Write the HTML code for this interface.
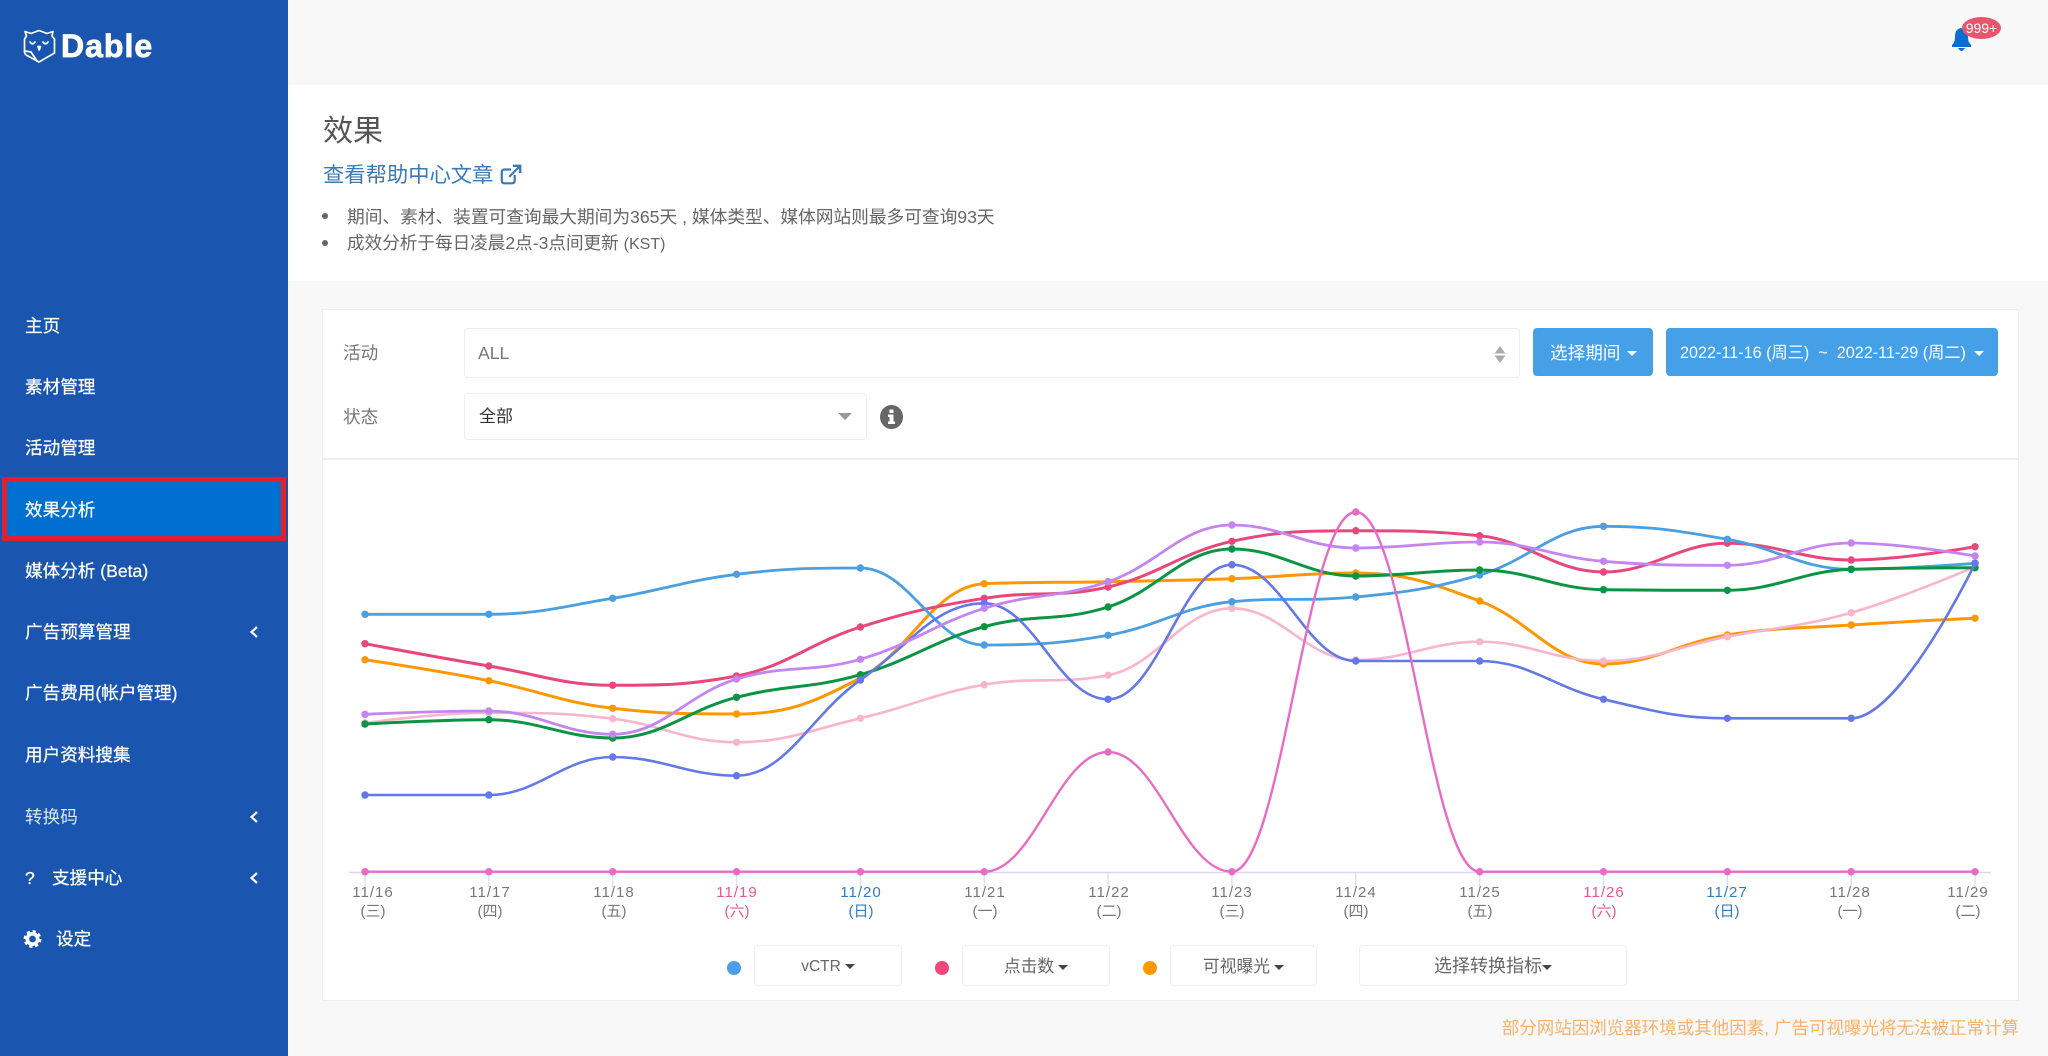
<!DOCTYPE html>
<html lang="zh"><head><meta charset="utf-8"><title>效果</title>
<style>
html,body{margin:0;padding:0;width:2048px;height:1056px;overflow:hidden;background:#f8f8f8}
body{position:relative;font-family:"Liberation Sans","Noto Sans CJK SC",sans-serif;color:#666}
div,a,span.a{position:absolute;box-sizing:border-box}
.t{white-space:nowrap;height:30px;line-height:30px;font-size:17.6px}
#side{left:0;top:0;width:288px;height:1056px;background:#1a56b0}
.m{left:25px;color:#fff;-webkit-text-stroke:.25px #fff}
.box{background:#fff;border:1px solid #eee;border-radius:4px}
.btn{background:#46a0e8;border-radius:4px;color:#fff}
.car{width:0;height:0;border-left:5.5px solid transparent;border-right:5.5px solid transparent;border-top:5.5px solid #fff}
.lab{width:80px;text-align:center;font-size:15px;letter-spacing:1px;height:20px;line-height:20px;white-space:nowrap;color:#777}
.w{width:80px;text-align:center;font-size:15px;height:22px;line-height:22px;color:#777}
.sat{color:#e8578a}.sun{color:#2f7cc4}
.dot{width:14px;height:14px;border-radius:50%}
.lg{background:#fff;border:1px solid #f0f0f0;border-radius:4px;top:945px;height:41px;line-height:41px;text-align:center;font-size:16.8px;color:#666;white-space:nowrap}
.dc{display:inline-block;width:0;height:0;border-left:5px solid transparent;border-right:5px solid transparent;border-top:5.5px solid #444;vertical-align:2px;margin-left:4px}
svg{position:absolute}
</style></head><body>

<div id="side"></div>
<svg style="left:22px;top:28px" width="36" height="36" viewBox="0 0 36 36" fill="none" stroke="#fff" stroke-width="1.7" stroke-linejoin="round" stroke-linecap="round">
<path d="M3 3.500 L9 5.500 L17 2.500 L25 5.500 L31 3.500 L30 8 L32.500 11 V25 L17 34 L5 27.500 Q2.500 26 2.500 24 V11 L4.500 8 Z"/>
<path d="M3 23 L9 24 L15 33"/>
<path d="M8 14 Q10.500 17.500 13 14 M21 14 Q23.500 17.500 26 14"/>
<path d="M16 18.500 L17.200 22 L18.500 18.500 Z" fill="#fff"/>
</svg>
<div class="t" style="left:61px;top:30px;height:32px;line-height:32px;font-size:32px;font-weight:700;color:#fff;letter-spacing:1px;-webkit-text-stroke:.8px #fff">Dable</div>

<div class="t m" style="top:311px">主页</div>
<div class="t m" style="top:372px">素材管理</div>
<div class="t m" style="top:433px">活动管理</div>
<div style="left:2px;top:477px;width:284px;height:64px;background:#0070d0;border:5px solid #e0202c"></div>
<div class="t m" style="top:495px">效果分析</div>
<div class="t m" style="top:556px">媒体分析 (Beta)</div>
<div class="t m" style="top:617px">广告预算管理</div>
<div class="t m" style="top:678px">广告费用(帐户管理)</div>
<div class="t m" style="top:740px">用户资料搜集</div>
<div class="t m" style="top:802px;-webkit-text-stroke:0;color:#dbe6f6">转换码</div>
<div class="t m" style="top:863px">?</div>
<div class="t m" style="left:52px;top:863px">支援中心</div>
<svg style="left:20px;top:929px" width="24" height="20" viewBox="0 0 24 20"><circle cx="12.500" cy="10" r="5.200" fill="none" stroke="#fff" stroke-width="3.600"/><circle cx="12.500" cy="10" r="7.800" fill="none" stroke="#fff" stroke-width="2.200" stroke-dasharray="3.300 2.800"/></svg>
<div class="t m" style="left:56px;top:924px">设定</div>
<svg style="left:248px;top:624px" width="12" height="16" viewBox="0 0 12 16" fill="none" stroke="#fff" stroke-width="2.200"><path d="M9 3 L3.500 8 L9 13"/></svg>
<svg style="left:248px;top:809px" width="12" height="16" viewBox="0 0 12 16" fill="none" stroke="#fff" stroke-width="2.200"><path d="M9 3 L3.500 8 L9 13"/></svg>
<svg style="left:248px;top:870px" width="12" height="16" viewBox="0 0 12 16" fill="none" stroke="#fff" stroke-width="2.200"><path d="M9 3 L3.500 8 L9 13"/></svg>

<svg style="left:1950px;top:26px" width="24" height="26" viewBox="0 0 24 26"><path d="M11 2 C6 3 5 7 5 11 C5 15 4 17 2 19 L2 21 L21 21 L21 19 C19 17 18 15 18 11 C18 7 16 3 11 2 Z" fill="#0a6ed1"/><path d="M8 22 H15 Q13 25 11.500 25 Q10 25 8 22 Z" fill="#0a6ed1"/></svg>
<div style="left:1962px;top:17px;width:39px;height:22px;border-radius:50%;background:#e8566e;color:#fff;font-size:14px;line-height:22px;text-align:center">999+</div>

<div style="left:288px;top:85px;width:1760px;height:196px;background:#fff"></div>
<div class="t" style="left:323px;top:112px;height:40px;line-height:40px;font-size:30px;color:#555">效果</div>
<div class="t" style="left:323px;top:160px;font-size:21.3px;color:#3a7ab8">查看帮助中心文章</div>
<svg style="left:499px;top:163px" width="24" height="24" viewBox="0 0 26 26" fill="none" stroke="#3a7ab8" stroke-width="2.400"><path d="M17 13 V19 Q17 22 14 22 H6 Q3 22 3 19 V10 Q3 7 6 7 H13"/><path d="M11 15 L22 4"/><path d="M15 3 H23 V11" stroke-width="2.600"/></svg>
<div style="left:322px;top:213px;width:6px;height:6px;border-radius:50%;background:#666"></div>
<div style="left:322px;top:240px;width:6px;height:6px;border-radius:50%;background:#666"></div>
<div class="t" style="left:347px;top:202px;font-size:17.7px">期间、素材、装置可查询最大期间为365天 , 媒体类型、媒体网站则最多可查询93天</div>
<div class="t" style="left:347px;top:228px">成效分析于每日凌晨2点-3点间更新 <span style="font-size:16px">(KST)</span></div>

<div style="left:322px;top:309px;width:1697px;height:692px;background:#fff;border:1px solid #eee"></div>
<div style="left:323px;top:458px;width:1695px;height:2px;background:#eee"></div>

<div class="t" style="left:343px;top:338px;color:#777">活动</div>
<div class="box" style="left:464px;top:328px;width:1056px;height:50px"></div>
<div class="t" style="left:478px;top:338px;color:#777">ALL</div>
<svg style="left:1493px;top:345px" width="14" height="20" viewBox="0 0 14 20" fill="#aaa"><path d="M7 1 L12.500 8.500 H1.500 Z M7 18 L12.500 10.500 H1.500 Z"/></svg>

<div class="btn" style="left:1533px;top:328px;width:120px;height:48px"></div>
<div class="t" style="left:1550px;top:338px;color:#fff">选择期间</div>
<div class="car" style="left:1627px;top:351px"></div>
<div class="btn" style="left:1666px;top:328px;width:332px;height:48px"></div>
<div class="t" style="left:1680px;top:338px;color:#fff;font-size:16.2px">2022-11-16 (周三) &nbsp;~&nbsp; 2022-11-29 (周二)</div>
<div class="car" style="left:1974px;top:351px"></div>

<div class="t" style="left:343px;top:402px;color:#777">状态</div>
<div class="box" style="left:464px;top:393px;width:403px;height:47px"></div>
<div class="t" style="left:479px;top:402px;color:#333;font-size:17px">全部</div>
<div style="left:838px;top:413px;width:0;height:0;border-left:7px solid transparent;border-right:7px solid transparent;border-top:7px solid #999"></div>
<svg style="left:879px;top:404px" width="25" height="26" viewBox="0 0 25 26"><ellipse cx="12.500" cy="13" rx="11.500" ry="12" fill="#666"/><path d="M10.500 5.500 h4 v3.500 h-4 z M9 10.500 h5.500 v7 h1.500 v2.500 h-7 v-2.500 h1.500 v-4.500 h-1.500 z" fill="#fff"/></svg>

<svg id="chart" style="left:0;top:0" width="2048" height="1056" viewBox="0 0 2048 1056"></svg>

<div class="lab" style="left:333px;top:883px">11/16</div><div class="w" style="left:333px;top:901px">(三)</div>
<div class="lab" style="left:450px;top:883px">11/17</div><div class="w" style="left:450px;top:901px">(四)</div>
<div class="lab" style="left:574px;top:883px">11/18</div><div class="w" style="left:574px;top:901px">(五)</div>
<div class="lab sat" style="left:697px;top:883px">11/19</div><div class="w sat" style="left:697px;top:901px">(六)</div>
<div class="lab sun" style="left:821px;top:883px">11/20</div><div class="w sun" style="left:821px;top:901px">(日)</div>
<div class="lab" style="left:945px;top:883px">11/21</div><div class="w" style="left:945px;top:901px">(一)</div>
<div class="lab" style="left:1069px;top:883px">11/22</div><div class="w" style="left:1069px;top:901px">(二)</div>
<div class="lab" style="left:1192px;top:883px">11/23</div><div class="w" style="left:1192px;top:901px">(三)</div>
<div class="lab" style="left:1316px;top:883px">11/24</div><div class="w" style="left:1316px;top:901px">(四)</div>
<div class="lab" style="left:1440px;top:883px">11/25</div><div class="w" style="left:1440px;top:901px">(五)</div>
<div class="lab sat" style="left:1564px;top:883px">11/26</div><div class="w sat" style="left:1564px;top:901px">(六)</div>
<div class="lab sun" style="left:1687px;top:883px">11/27</div><div class="w sun" style="left:1687px;top:901px">(日)</div>
<div class="lab" style="left:1810px;top:883px">11/28</div><div class="w" style="left:1810px;top:901px">(一)</div>
<div class="lab" style="left:1928px;top:883px">11/29</div><div class="w" style="left:1928px;top:901px">(二)</div>

<div class="dot" style="left:727px;top:961px;background:#4a9fe8"></div>
<div class="lg" style="left:754px;width:148px;font-size:15.5px">vCTR<span class="dc"></span></div>
<div class="dot" style="left:935px;top:961px;background:#f0487c"></div>
<div class="lg" style="left:962px;width:148px">点击数<span class="dc"></span></div>
<div class="dot" style="left:1143px;top:961px;background:#ff9800"></div>
<div class="lg" style="left:1170px;width:147px">可视曝光<span class="dc"></span></div>
<div class="lg" style="left:1359px;width:268px;font-size:18px">选择转换指标<span class="dc" style="margin-left:0"></span></div>

<div class="t" style="right:29px;top:1013px;color:#f9b26a;font-size:17.5px">部分网站因浏览器环境或其他因素, 广告可视曝光将无法被正常计算</div>

<script>
(function(){
var NS="http://www.w3.org/2000/svg",svg=document.getElementById("chart");
var X=[];for(var i=0;i<14;i++)X.push(365+123.85*i);
function el(n,a){var e=document.createElementNS(NS,n);for(var k in a)e.setAttribute(k,a[k]);svg.appendChild(e);return e}
el("line",{x1:349,y1:872.5,x2:1991,y2:872.5,stroke:"#d9d9ee","stroke-width":1.5});
X.forEach(function(x){el("line",{x1:x,y1:873,x2:x,y2:887,stroke:"#dde3ee","stroke-width":1.5})});
var S=[
["#ff9800",3,[659.7,680.7,708.3,714,678,583.7,581.7,578.7,573,601,664,635,625,618.3]],
["#f8b6ce",2.6,[723,712.7,718.7,742.3,718.3,684.7,675.3,608.3,660,641.7,661,636.7,612.7,566.7]],
["#e8477c",3,[643.7,666,685.3,676,627,598.3,587,541.3,530.7,535.7,572,543.3,560,546.7]],
["#4a9fe0",2.8,[614.3,614.3,598.3,574.3,568,645,635.3,601.7,597,575,526.3,539.3,569.3,563.3]],
["#0b9444",3,[724,719.7,738,697.3,674.7,626.7,607,549,576,570,589.7,590.3,569.3,567.7]],
["#6478e8",2.6,[795,795,757,775.7,680,603.3,699.3,564.7,661,661,699.3,718.3,718.3,563.3]],
["#c585f0",2.8,[714.3,711,734.3,679,659.3,608.3,581.7,525,548,542,561.3,565.3,543,556]],
["#e86cc4",2.4,[871.7,871.7,871.7,871.7,871.7,871.7,752,871.7,512,871.7,871.7,871.7,871.7,871.7]]
];
S.forEach(function(s){
 var Y=s[2],n=Y.length,L=[],R=[];
 for(var i=0;i<n;i++){
  if(i==0||i==n-1){L[i]=R[i]=Y[i];continue}
  var a=Y[i-1],b=Y[i],c=Y[i+1],d=0.2*(c-a),l=b-d,r=b+d;
  if(l>a&&l>b){l=Math.max(a,b);r=2*b-l}else if(l<a&&l<b){l=Math.min(a,b);r=2*b-l}
  if(r>c&&r>b){r=Math.max(c,b);l=2*b-r}else if(r<c&&r<b){r=Math.min(c,b);l=2*b-r}
  L[i]=l;R[i]=r;
 }
 var h=123.85*0.4,d="M"+X[0]+" "+Y[0];
 for(var j=1;j<n;j++){d+=" C"+(X[j-1]+(j==1?0:h))+" "+R[j-1]+" "+(X[j]-(j==n-1?0:h))+" "+L[j]+" "+X[j]+" "+Y[j]}
 el("path",{d:d,fill:"none",stroke:s[0],"stroke-width":s[1]});
 for(var k=0;k<n;k++)el("circle",{cx:X[k],cy:Y[k],r:3.7,fill:s[0]});
});
})();
</script>
</body></html>
